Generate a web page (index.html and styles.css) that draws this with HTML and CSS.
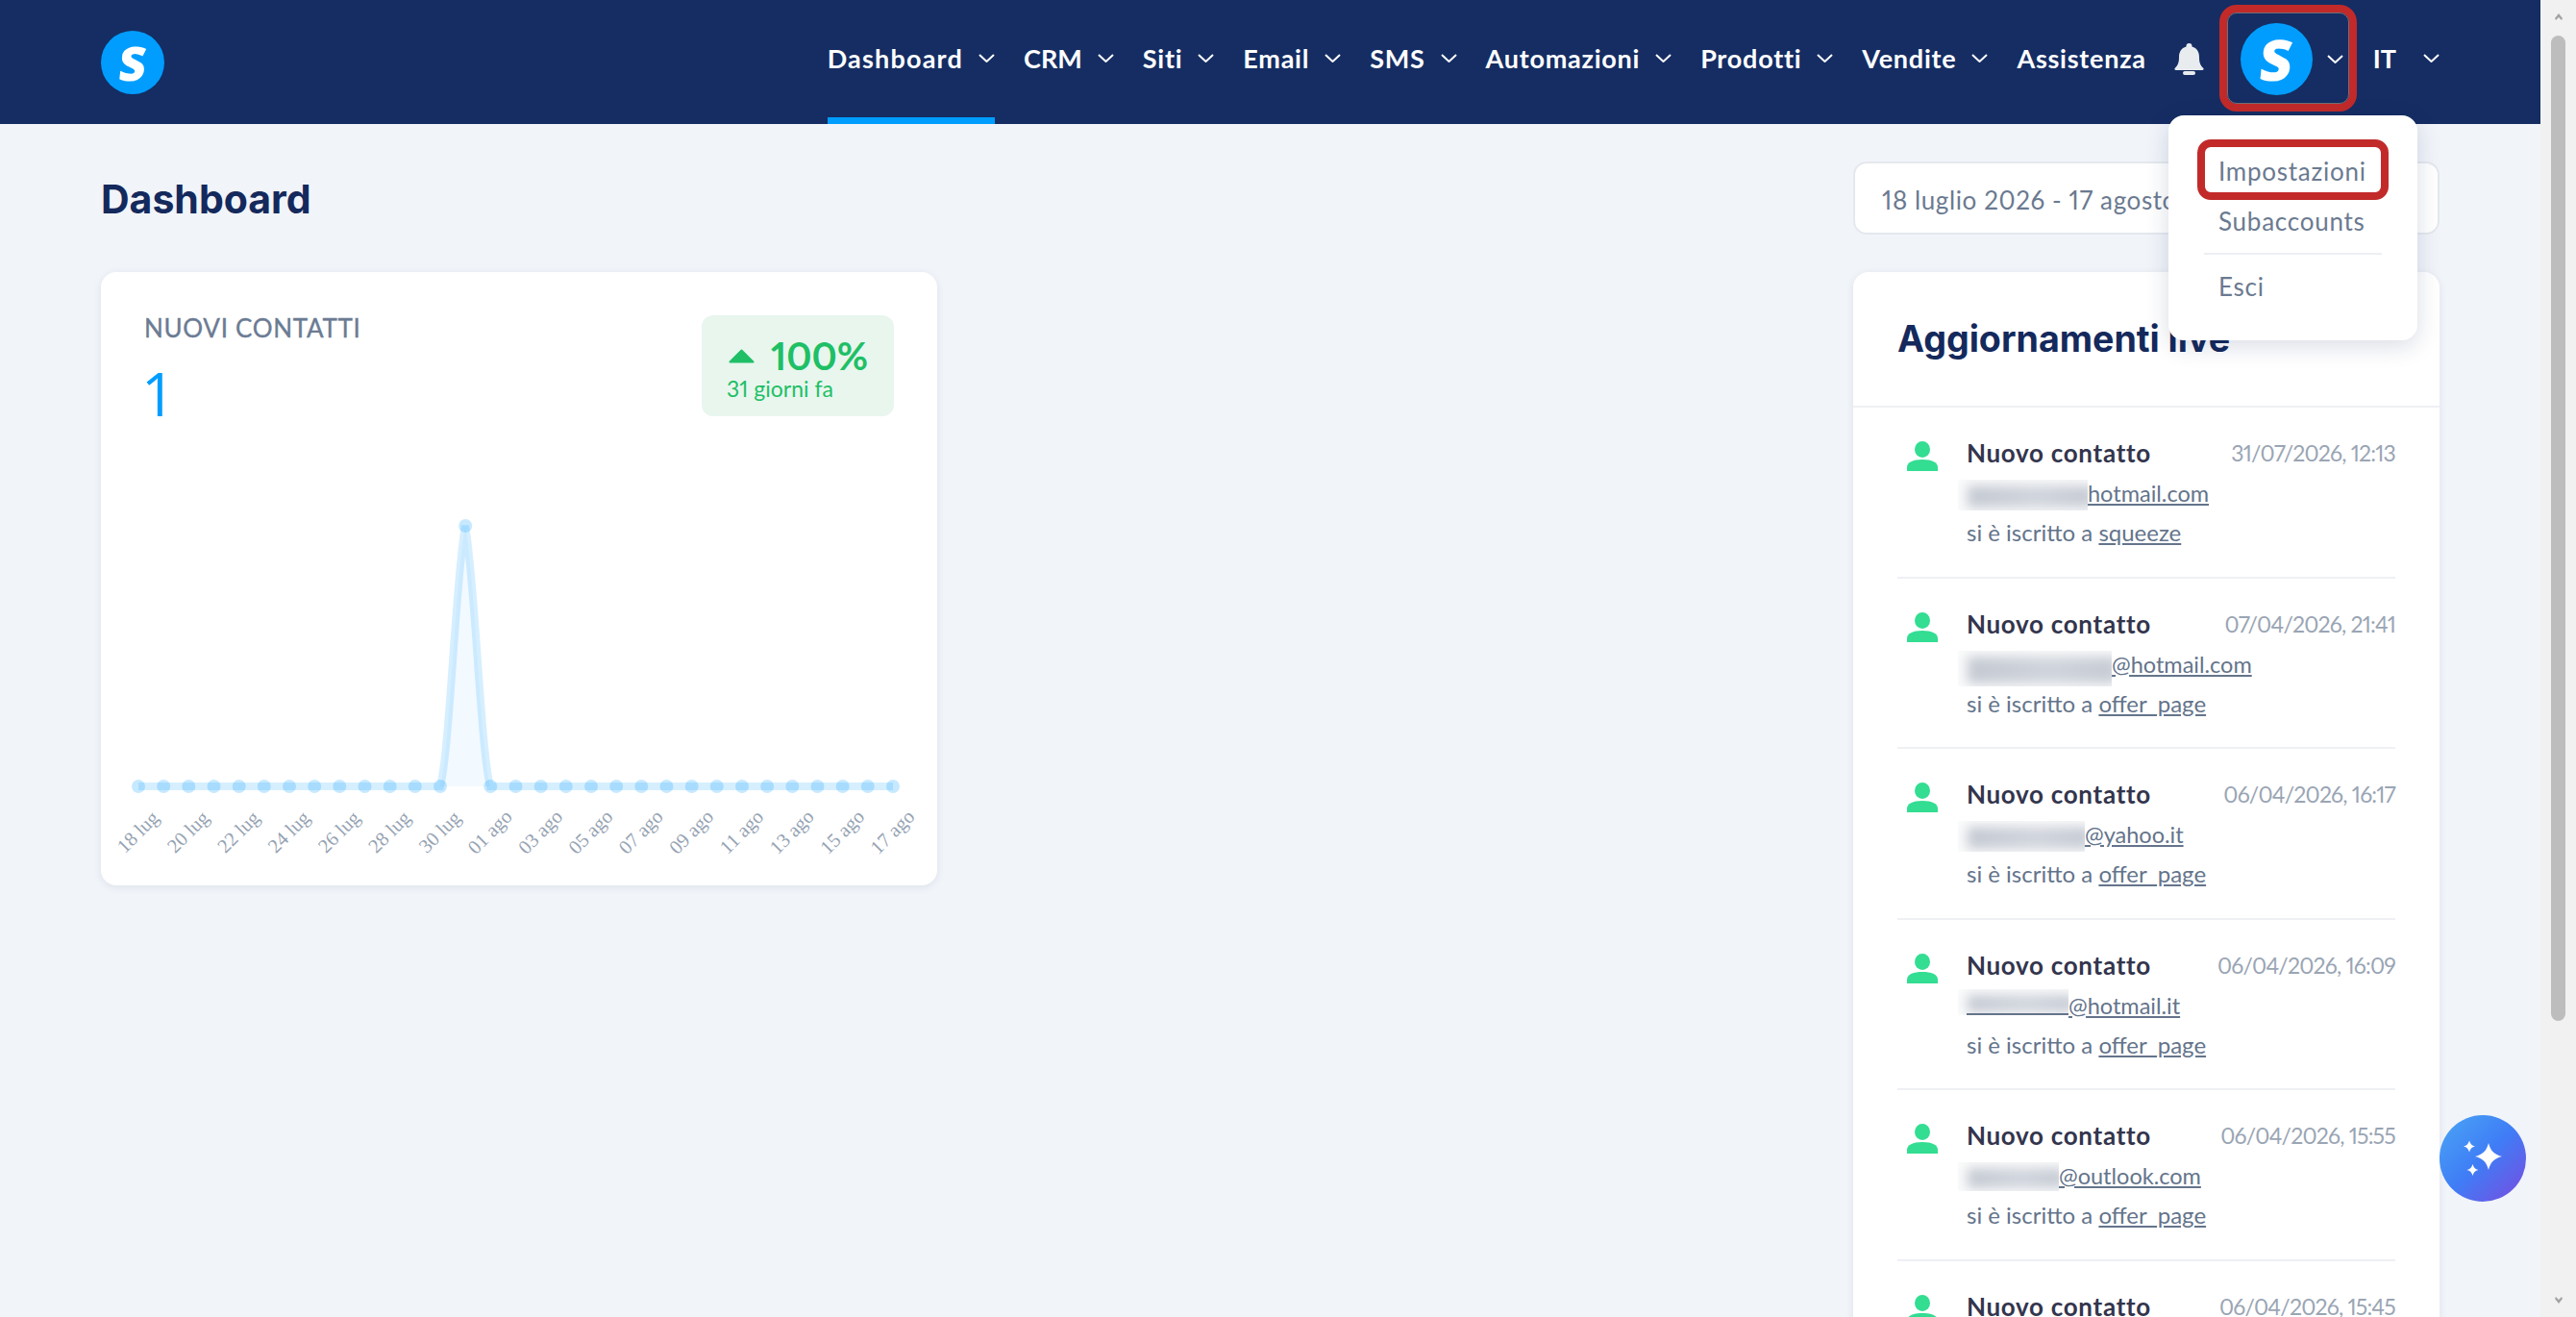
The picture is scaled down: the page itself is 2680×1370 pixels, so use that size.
FILE: index.html
```html
<!DOCTYPE html>
<html lang="it">
<head>
<meta charset="utf-8">
<title>Dashboard</title>
<link rel="stylesheet" href="styles.css">
</head>
<body>
<div class="app">
  <main class="main">
    <header class="topbar">
      <div class="brand"><span class="logo"><b class="mark">S</b></span></div>
      <nav class="nav">
        <a class="nav-item active"><span>Dashboard</span><svg class="chev" viewBox="0 0 17 9"><path d="M1 1l7.500 7 7.500-7"/></svg></a>
        <a class="nav-item nav-caps"><span>CRM</span><svg class="chev" viewBox="0 0 17 9"><path d="M1 1l7.500 7 7.500-7"/></svg></a>
        <a class="nav-item"><span>Siti</span><svg class="chev" viewBox="0 0 17 9"><path d="M1 1l7.500 7 7.500-7"/></svg></a>
        <a class="nav-item"><span>Email</span><svg class="chev" viewBox="0 0 17 9"><path d="M1 1l7.500 7 7.500-7"/></svg></a>
        <a class="nav-item"><span>SMS</span><svg class="chev" viewBox="0 0 17 9"><path d="M1 1l7.500 7 7.500-7"/></svg></a>
        <a class="nav-item"><span>Automazioni</span><svg class="chev" viewBox="0 0 17 9"><path d="M1 1l7.500 7 7.500-7"/></svg></a>
        <a class="nav-item"><span>Prodotti</span><svg class="chev" viewBox="0 0 17 9"><path d="M1 1l7.500 7 7.500-7"/></svg></a>
        <a class="nav-item"><span>Vendite</span><svg class="chev" viewBox="0 0 17 9"><path d="M1 1l7.500 7 7.500-7"/></svg></a>
        <a class="nav-item"><span>Assistenza</span></a>
      </nav>
      <svg class="bell" viewBox="0 0 31 33"><path d="M15.500 0a3 3 0 0 1 3 3v.6C23.800 5 26 9.500 26 14.500c0 5.500 1.200 8.500 4.300 11.500.8.900.2 2-1 2H1.700c-1.200 0-1.800-1.100-1-2C3.800 23 5 20 5 14.500 5 9.500 7.200 5 12.500 3.600V3a3 3 0 0 1 3-3z"/><rect x="9" y="29" width="13" height="4" rx="2"/></svg>
      <div class="account">
        <span class="avatar"><b class="mark">S</b></span>
        <svg class="chev" viewBox="0 0 17 9"><path d="M1 1l7.500 7 7.500-7"/></svg>
      </div>
      <div class="lang"><span>IT</span><svg class="chev" viewBox="0 0 17 9"><path d="M1 1l7.500 7 7.500-7"/></svg></div>
      <div class="menu">
        <a class="menu-item highlighted">Impostazioni</a>
        <a class="menu-item">Subaccounts</a>
        <hr class="menu-sep">
        <a class="menu-item">Esci</a>
      </div>
    </header>

    <div class="content">
      <section class="col-left">
        <h1 class="page-title">Dashboard</h1>
        <article class="card stat-card">
          <div class="stat-head">
            <div>
              <div class="stat-label">NUOVI CONTATTI</div>
              <div class="stat-value">1</div>
            </div>
            <div class="badge">
              <div class="badge-top"><svg class="badge-arrow" viewBox="0 0 27 15"><path d="M13.500 1.500L25.500 13.500H1.500z"/></svg><span class="badge-pct">100%</span></div>
              <div class="badge-sub">31 giorni fa</div>
            </div>
          </div>
          <svg class="chart" viewBox="105 521 870 400" width="870" height="400">
            <path class="area" d="M458 818C468 780 474 600 484 547C494 600 500 780 510 818Z"/>
            <g class="dots">
              <circle cx="144" cy="818" r="7"/><circle cx="170.200" cy="818" r="7"/><circle cx="196.300" cy="818" r="7"/><circle cx="222.500" cy="818" r="7"/><circle cx="248.700" cy="818" r="7"/><circle cx="274.800" cy="818" r="7"/><circle cx="301" cy="818" r="7"/><circle cx="327.200" cy="818" r="7"/><circle cx="353.300" cy="818" r="7"/><circle cx="379.500" cy="818" r="7"/><circle cx="405.700" cy="818" r="7"/><circle cx="431.800" cy="818" r="7"/><circle cx="458" cy="818" r="7"/><circle cx="484.200" cy="547" r="7"/><circle cx="510.300" cy="818" r="7"/><circle cx="536.500" cy="818" r="7"/><circle cx="562.700" cy="818" r="7"/><circle cx="588.800" cy="818" r="7"/><circle cx="615" cy="818" r="7"/><circle cx="641.200" cy="818" r="7"/><circle cx="667.300" cy="818" r="7"/><circle cx="693.500" cy="818" r="7"/><circle cx="719.700" cy="818" r="7"/><circle cx="745.800" cy="818" r="7"/><circle cx="772" cy="818" r="7"/><circle cx="798.200" cy="818" r="7"/><circle cx="824.300" cy="818" r="7"/><circle cx="850.500" cy="818" r="7"/><circle cx="876.700" cy="818" r="7"/><circle cx="902.800" cy="818" r="7"/><circle cx="929" cy="818" r="7"/>
            </g>
            <path class="line" d="M144 818H458C468 780 474 600 484 547C494 600 500 780 510 818H929"/>
            <g class="ticks">
              <text x="144" y="872" transform="rotate(-45 144 866)">18 lug</text>
              <text x="196.300" y="872" transform="rotate(-45 196.300 866)">20 lug</text>
              <text x="248.700" y="872" transform="rotate(-45 248.700 866)">22 lug</text>
              <text x="301" y="872" transform="rotate(-45 301 866)">24 lug</text>
              <text x="353.300" y="872" transform="rotate(-45 353.300 866)">26 lug</text>
              <text x="405.700" y="872" transform="rotate(-45 405.700 866)">28 lug</text>
              <text x="458" y="872" transform="rotate(-45 458 866)">30 lug</text>
              <text x="510.300" y="872" transform="rotate(-45 510.300 866)">01 ago</text>
              <text x="562.700" y="872" transform="rotate(-45 562.700 866)">03 ago</text>
              <text x="615" y="872" transform="rotate(-45 615 866)">05 ago</text>
              <text x="667.300" y="872" transform="rotate(-45 667.300 866)">07 ago</text>
              <text x="719.700" y="872" transform="rotate(-45 719.700 866)">09 ago</text>
              <text x="772" y="872" transform="rotate(-45 772 866)">11 ago</text>
              <text x="824.300" y="872" transform="rotate(-45 824.300 866)">13 ago</text>
              <text x="876.700" y="872" transform="rotate(-45 876.700 866)">15 ago</text>
              <text x="929" y="872" transform="rotate(-45 929 866)">17 ago</text>
            </g>
          </svg>
        </article>
      </section>

      <section class="col-right">
        <div class="date-range">18 luglio 2026 - 17 agosto 2026</div>
        <article class="card live-card">
          <h2 class="live-title">Aggiornamenti live</h2>
          <ul class="feed">
            <li class="feed-item">
              <svg class="person" viewBox="0 0 32 31"><ellipse cx="16" cy="8.500" rx="8" ry="8.500"/><path d="M0 31v-4C0 22 6 19 16 19s16 3 16 8v4z"/></svg>
              <div class="feed-body">
                <div class="feed-top"><strong class="feed-name">Nuovo contatto</strong><time class="feed-date">31/07/2026, 12:13</time></div>
                <div class="feed-mail"><span class="mask" style="width:135px"><i class="smear"></i></span><a class="link">hotmail.com</a></div>
                <div class="feed-line">si è iscritto a <a class="link">squeeze</a></div>
              </div>
            </li>
            <li class="feed-item">
              <svg class="person" viewBox="0 0 32 31"><ellipse cx="16" cy="8.500" rx="8" ry="8.500"/><path d="M0 31v-4C0 22 6 19 16 19s16 3 16 8v4z"/></svg>
              <div class="feed-body">
                <div class="feed-top"><strong class="feed-name">Nuovo contatto</strong><time class="feed-date">07/04/2026, 21:41</time></div>
                <div class="feed-mail"><span class="mask" style="width:160px;height:37px"><i class="smear"></i></span><a class="link">@hotmail.com</a></div>
                <div class="feed-line">si è iscritto a <a class="link">offer_page</a></div>
              </div>
            </li>
            <li class="feed-item">
              <svg class="person" viewBox="0 0 32 31"><ellipse cx="16" cy="8.500" rx="8" ry="8.500"/><path d="M0 31v-4C0 22 6 19 16 19s16 3 16 8v4z"/></svg>
              <div class="feed-body">
                <div class="feed-top"><strong class="feed-name">Nuovo contatto</strong><time class="feed-date">06/04/2026, 16:17</time></div>
                <div class="feed-mail"><span class="mask" style="width:132px"><i class="smear"></i></span><a class="link">@yahoo.it</a></div>
                <div class="feed-line">si è iscritto a <a class="link">offer_page</a></div>
              </div>
            </li>
            <li class="feed-item">
              <svg class="person" viewBox="0 0 32 31"><ellipse cx="16" cy="8.500" rx="8" ry="8.500"/><path d="M0 31v-4C0 22 6 19 16 19s16 3 16 8v4z"/></svg>
              <div class="feed-body">
                <div class="feed-top"><strong class="feed-name">Nuovo contatto</strong><time class="feed-date">06/04/2026, 16:09</time></div>
                <div class="feed-mail"><span class="mask mask-short" style="width:115px"><i class="smear"></i></span><a class="link">@hotmail.it</a></div>
                <div class="feed-line">si è iscritto a <a class="link">offer_page</a></div>
              </div>
            </li>
            <li class="feed-item">
              <svg class="person" viewBox="0 0 32 31"><ellipse cx="16" cy="8.500" rx="8" ry="8.500"/><path d="M0 31v-4C0 22 6 19 16 19s16 3 16 8v4z"/></svg>
              <div class="feed-body">
                <div class="feed-top"><strong class="feed-name">Nuovo contatto</strong><time class="feed-date">06/04/2026, 15:55</time></div>
                <div class="feed-mail"><span class="mask" style="width:105px;height:30px"><i class="smear"></i></span><a class="link">@outlook.com</a></div>
                <div class="feed-line">si è iscritto a <a class="link">offer_page</a></div>
              </div>
            </li>
            <li class="feed-item">
              <svg class="person" viewBox="0 0 32 31"><ellipse cx="16" cy="8.500" rx="8" ry="8.500"/><path d="M0 31v-4C0 22 6 19 16 19s16 3 16 8v4z"/></svg>
              <div class="feed-body">
                <div class="feed-top"><strong class="feed-name">Nuovo contatto</strong><time class="feed-date">06/04/2026, 15:45</time></div>
              </div>
            </li>
          </ul>
        </article>
      </section>
    </div>

    <button class="fab" aria-label="AI">
      <svg viewBox="0 0 90 90" width="90" height="90"><path d="M51 29C53 37 57 41 65 43C57 45 53 49 51 57C49 49 45 45 37 43C45 41 49 37 51 29Z"/><path d="M31 26.500C32 30 33.500 31.500 37 32.500C33.500 33.500 32 35 31 38.500C30 35 28.500 33.500 25 32.500C28.500 31.500 30 30 31 26.500Z"/><path d="M34.500 51C35.500 54.500 37 56 40.500 57C37 58 35.500 59.500 34.500 63C33.500 59.500 32 58 28.500 57C32 56 33.500 54.500 34.500 51Z"/></svg>
    </button>
  </main>

  <aside class="scrollbar" aria-hidden="true">
    <svg class="sb-arrow" viewBox="0 0 10 8"><path d="M5 0l4 5-1 2-3-3-3 3-1-2z"/></svg>
    <div class="sb-track"><div class="sb-thumb"></div></div>
    <svg class="sb-arrow" viewBox="0 0 10 8"><path d="M5 8L1 3l1-2 3 3 3-3 1 2z"/></svg>
  </aside>
</div>
</body>
</html>
```

FILE: styles.css
```css
*, *::before, *::after { box-sizing: border-box; }
html, body { margin: 0; height: 100%; overflow: hidden; }
body { font-family: "Lato", "Noto Sans", sans-serif; font-feature-settings: "pnum"; font-variant-numeric: proportional-nums; background: #f1f4f9; color: #64748b; }
a { color: inherit; }
.app { display: flex; height: 1370px; width: 2680px; }
.main { width: 2643px; height: 1370px; position: relative; overflow: hidden; }

/* top bar */
.topbar { height: 129px; background: #152d63; display: flex; align-items: flex-start; position: relative; padding-left: 105px; color: #fff; }
.brand { margin-top: 32px; }
.mark { display: block; font-family: "Open Sans", sans-serif; font-weight: 800; font-style: normal; transform: skewX(-6deg); }
.logo { width: 66px; height: 66px; border-radius: 50%; background: #009dff; color: #fff; display: flex; align-items: center; justify-content: center; font-size: 49px; line-height: 1; }
.nav { display: flex; gap: 30px; margin-left: auto; height: 129px; }
.nav-item { display: flex; align-items: flex-start; height: 129px; padding-top: 43px; gap: 16px; font-size: 27px; font-weight: 700; line-height: 36px; letter-spacing: .75px; border-bottom: 7px solid transparent; }
.nav-item.active { border-bottom-color: #009dff; letter-spacing: 1.2px; }
.nav-item.nav-caps { letter-spacing: 0; }
.chev { width: 17px; height: 9px; flex: none; margin-top: 13px; }
.chev path { fill: none; stroke: #fff; stroke-width: 2; }
.bell { width: 31px; height: 33px; margin: 45px 0 0 29px; flex: none; }
.bell path, .bell rect { fill: #e9ecef; }
.account { width: 143px; height: 111px; margin: 5px 0 0 16px; flex: none; border: 8px solid #c22a2a; border-radius: 18px; outline: 1px solid #6f6f78; outline-offset: -9px; display: flex; align-items: flex-start; padding: 11px 0 0 14px; gap: 15px; }
.avatar { width: 75px; height: 75px; border-radius: 50%; background: #009dff; color: #fff; display: flex; align-items: center; justify-content: center; font-size: 59px; line-height: 1; flex: none; }
.account .chev { margin-top: 33px; }
.lang { display: flex; align-items: flex-start; margin: 43px 105px 0 17px; gap: 28px; font-size: 27px; font-weight: 700; line-height: 36px; }

/* dropdown */
.menu { position: absolute; left: 2256px; top: 120px; width: 259px; height: 234px; background: #fff; border-radius: 16px; box-shadow: 0 6px 24px rgba(20, 40, 90, .16); padding: 40px 37px 0; z-index: 5; color: #6b7a90; }
.menu-item { display: block; font-size: 26px; line-height: 36px; height: 36px; position: relative; padding-left: 15px; letter-spacing: .75px; }
.menu-item + .menu-item { margin-top: 16px; }
.menu-item.highlighted::before { content: ""; position: absolute; left: -7px; top: -15px; width: 199px; height: 63px; border: 8px solid #c22a2a; border-radius: 14px; }
.menu-sep { border: 0; border-top: 2px solid #eceff3; margin: 15px 0; width: 185px; }

/* content */
.content { display: flex; justify-content: space-between; padding: 0 105px; }
.col-left { width: 870px; }
.col-right { width: 610px; }
.page-title { margin: 0; height: 154px; padding-top: 50px; font: 700 41px/56px "Inter", sans-serif; color: #14295c; }
.card { background: #fff; border-radius: 16px; box-shadow: 0 2px 8px rgba(30, 50, 90, .09); }

.stat-card { height: 638px; padding-top: 45px; }
.stat-head { display: flex; justify-content: space-between; padding: 0 45px; height: 105px; }
.stat-label { font-size: 26px; font-weight: 400; line-height: 36px; margin-top: -5px; color: #6b7b93; letter-spacing: .7px; -webkit-text-stroke: .35px #6b7b93; }
.stat-value { font: 400 62px/64px "Open Sans", sans-serif; margin: 18px 0 0 -3px; color: #009dff; }
.badge { width: 200px; height: 105px; background: #e8f6ee; border-radius: 12px; padding: 22px 26px 0; color: #1fbf66; }
.badge-top { display: flex; align-items: center; gap: 17px; height: 40px; }
.badge-arrow { width: 27px; height: 15px; flex: none; margin-left: 2px; fill: #1fbf66; stroke: #1fbf66; stroke-width: 2; stroke-linejoin: round; }
.badge-pct { font-size: 39.5px; font-weight: 700; line-height: 40px; }
.badge-sub { font-size: 23px; line-height: 32px; margin-top: -2px; }
.chart { display: block; margin-top: 88px; }
.area { fill: #f2f9ff; }
.line { fill: none; stroke: rgba(0, 157, 255, .16); stroke-width: 8; }
.dots circle { fill: rgba(0, 157, 255, .22); }
.ticks text { font: 20.5px "Liberation Serif", serif; fill: #96a3b3; text-anchor: middle; }

.date-range { height: 76px; margin: 39px 0; background: #fff; border: 2px solid #e5e8ee; border-radius: 14px; padding: 0 28px; font-size: 26px; line-height: 76px; color: #6b7a90; letter-spacing: .6px; }
.live-card { height: 1200px; border-radius: 16px 16px 0 0; }
.live-title { margin: 0; height: 141px; border-bottom: 2px solid #eef0f4; padding: 0 46px; font: 700 37.6px/140px "Inter", sans-serif; color: #14295c; }
.feed { list-style: none; margin: 0; padding: 0 46px; }
.feed-item { display: flex; height: 177.5px; border-bottom: 2px solid #eef0f4; padding-top: 29px; }
.person { width: 32px; height: 31px; fill: #33dd92; flex: none; margin: 6px 30px 0 10px; }
.feed-body { flex: 1; min-width: 0; }
.feed-top { display: flex; justify-content: space-between; height: 36px; line-height: 36px; }
.feed-name { font-size: 26px; font-weight: 700; color: #33354d; letter-spacing: .7px; }
.feed-date { font-size: 23px; color: #9aa5b4; letter-spacing: -.8px; }
.feed-mail { display: flex; height: 36px; margin-top: 6px; font-size: 23.5px; line-height: 36px; }
.feed-line { height: 36px; margin-top: 5px; font-size: 24px; line-height: 36px; color: #64748b; }
.link { text-decoration: underline; color: #64748b; }
.mask { display: block; height: 32px; margin: 4px 0 0 -9px; background: #fafbfb; flex: none; overflow: hidden; position: relative; }
.mask-short { height: 27px; margin-top: 1px; }
.mask-short::after { content: ""; position: absolute; left: 9px; right: 0; bottom: 0; height: 2px; background: #64748b; }
.smear { position: absolute; left: 10px; right: -6px; top: 6px; bottom: 3px; background: linear-gradient(90deg, #c4c9d2, #d0d4dc 55%, #c6cbd4); filter: blur(6px); }

.fab { position: absolute; left: 2538px; top: 1160px; width: 90px; height: 90px; border: 0; padding: 0; border-radius: 50%; background: linear-gradient(135deg, #4aa6f5 0%, #3f7df6 50%, #7a4be0 100%); z-index: 4; }
.fab svg { display: block; fill: #fff; }

/* window scrollbar */
.scrollbar { width: 37px; height: 1370px; background: #f1f1f1; display: flex; flex-direction: column; align-items: center; flex: none; }
.sb-arrow { width: 10px; height: 8px; fill: #a3a3a3; flex: none; margin: 14px 0 0 0; }
.sb-arrow:last-child { margin: 0 0 14px 0; }
.sb-track { flex: 1; width: 100%; padding: 15px 11px 0 11px; }
.sb-thumb { height: 1025px; background: #bdbdbd; border-radius: 8px; }
```
